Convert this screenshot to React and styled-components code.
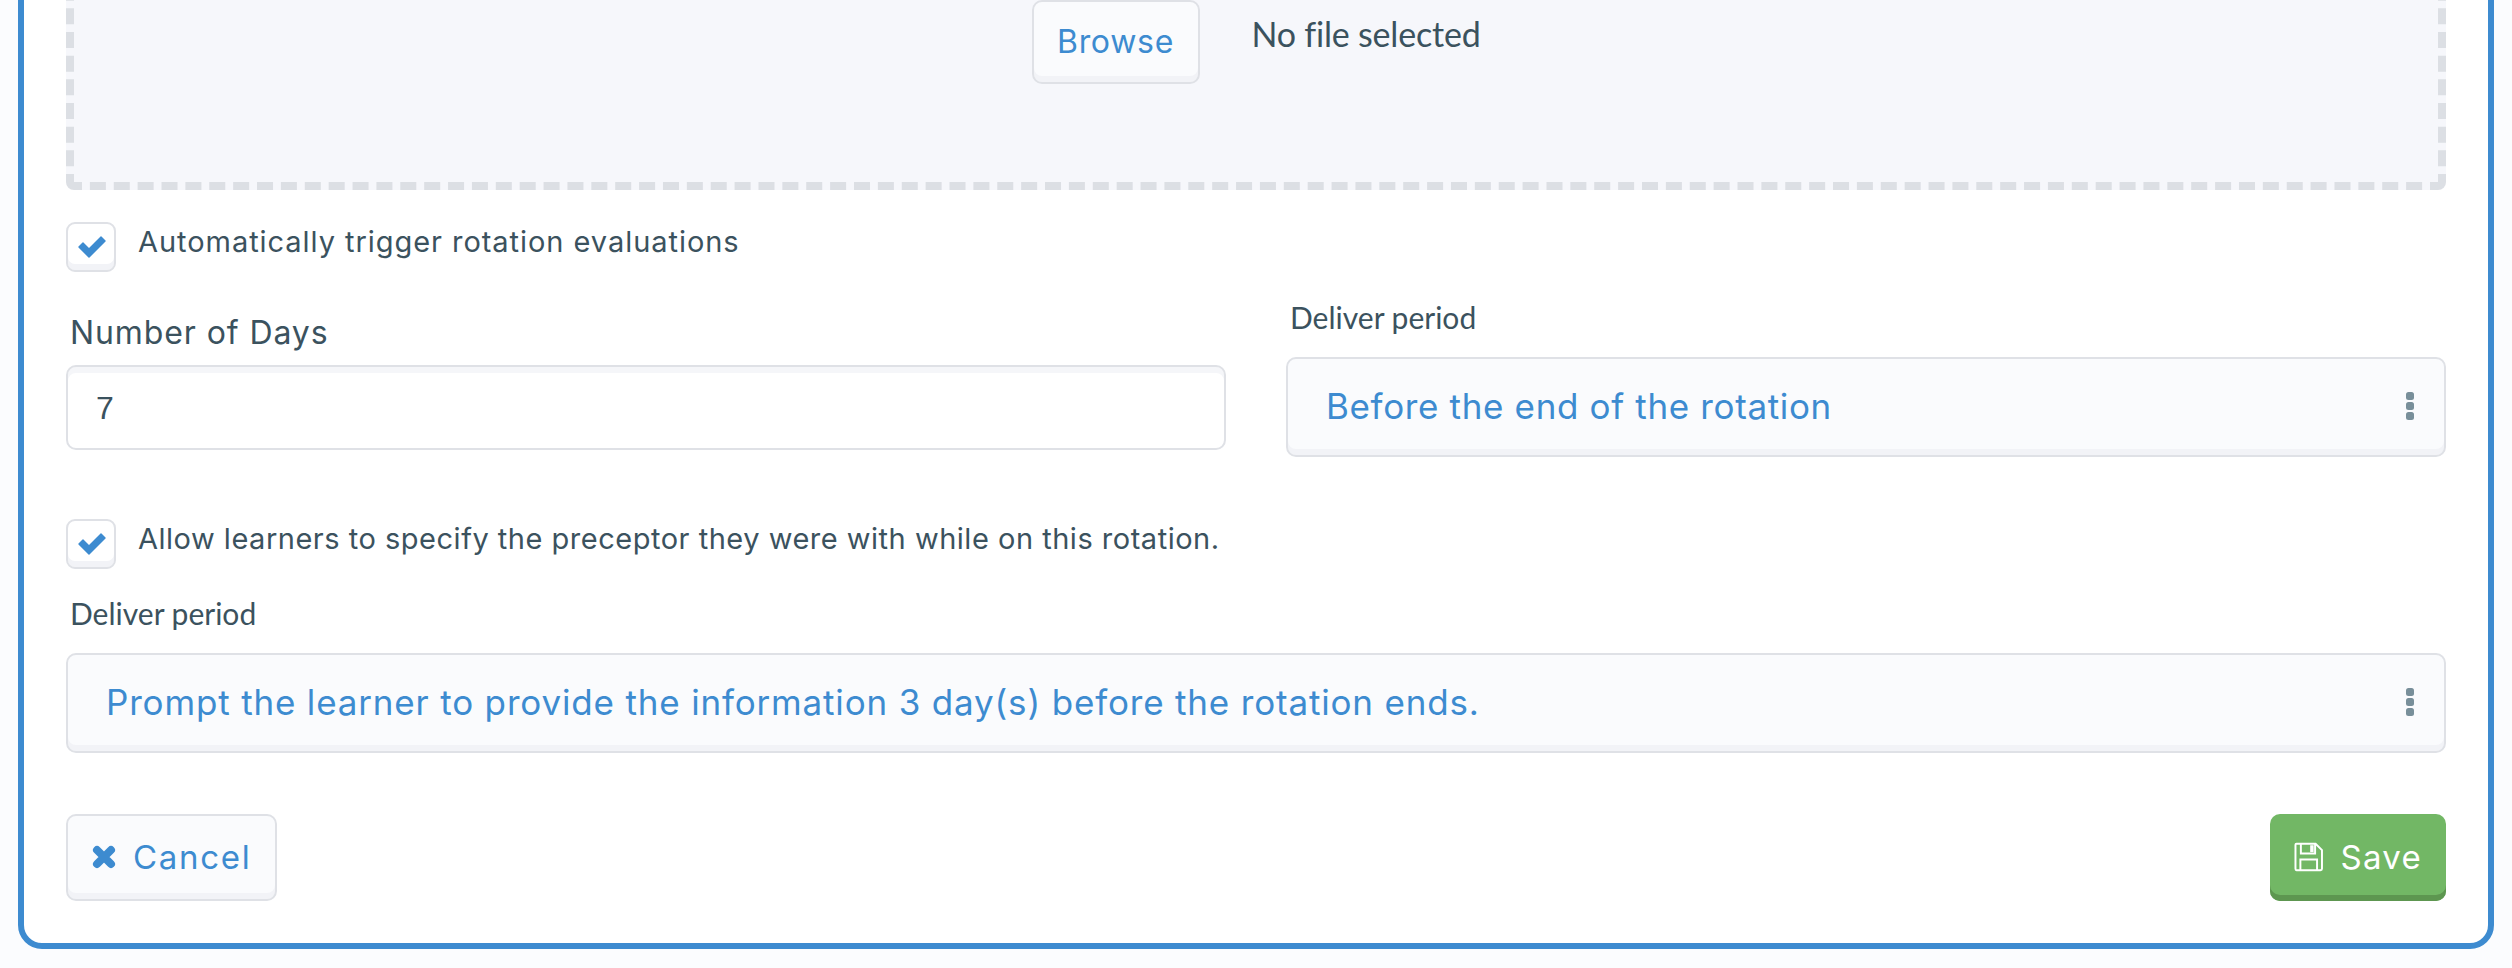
import React from 'react';
import styled, { createGlobalStyle } from 'styled-components';

const GlobalStyle = createGlobalStyle`
  html, body {
    margin: 0;
    padding: 0;
    background-color: #fbfcfe;
  }
  * {
    box-sizing: border-box;
  }
`;

const Page = styled.div`
  height: 968px;
  overflow: hidden;
  display: flex;
  flex-direction: column;
  justify-content: flex-end;
  padding: 0 18px 19px;
`;

const Panel = styled.section`
  flex-shrink: 0;
  background-color: #fff;
  border: 6px solid #3d8bd0;
  border-radius: 24px;
  padding: 24px 42px 42px;
  color: #3b525e;
`;

const DropZone = styled.div`
  height: 300px;
  background-color: #f6f7fb;
  border: 8px dashed #dcdfe4;
  border-radius: 8px;
  display: flex;
  justify-content: center;
  align-items: flex-start;
  gap: 52px;
  padding-top: 102px;
`;

const Button = styled.button`
  display: inline-flex;
  align-items: center;
  height: 87px;
  border-radius: 10px;
  border: 2px solid #dfe1e6;
  box-shadow: inset 0 -6px 0 #f2f3f7;
  background-color: #fafbfd;
  color: #3d8bd0;
  font-family: Inter, sans-serif;
  font-size: 33px;
  letter-spacing: 1.7px;
  padding: 0 24px 2px;
  gap: 17px;
`;

const BrowseButton = styled(Button)`
  height: 84px;
  width: 168px;
  justify-content: center;
  padding: 0 0 2px;
  font-size: 32px;
  letter-spacing: 0.7px;
`;

const SaveButton = styled(Button)`
  border: none;
  background-color: #72b765;
  box-shadow: inset 0 -6px 0 #5d9650;
  color: #fff;
  width: 176px;
  letter-spacing: 1.3px;
`;

const FileName = styled.span`
  font-family: Lato, sans-serif;
  font-size: 34px;
  line-height: 44px;
  letter-spacing: -0.2px;
  margin-top: 12px;
`;

const CheckRow = styled.div`
  display: flex;
  align-items: flex-start;
  gap: 22px;
  margin-top: ${(p) => p.$top}px;
`;

const CheckBox = styled.span`
  flex-shrink: 0;
  width: 50px;
  height: 50px;
  border-radius: 9px;
  border: 2px solid #dfe1e6;
  box-shadow: inset 0 -6px 0 #f2f3f7;
  background-color: #fff;
  display: flex;
  align-items: center;
  justify-content: center;
  padding: 0 0 1px 2px;
`;

const CheckText = styled.span`
  font-family: Inter, sans-serif;
  font-size: 29px;
  line-height: 42px;
  letter-spacing: ${(p) => p.$spacing}px;
  margin-top: -1px;
`;

const FieldRow = styled.div`
  display: grid;
  grid-template-columns: 1fr 1fr;
  column-gap: 60px;
  margin-top: 25px;
`;

const Field = styled.div`
  display: flex;
  flex-direction: column;
`;

const BigLabel = styled.label`
  display: block;
  font-family: Inter, sans-serif;
  font-size: 32px;
  line-height: 44px;
  letter-spacing: 0.9px;
  padding-left: 4px;
  margin-top: 14px;
  margin-bottom: 10px;
`;

const SmallLabel = styled.label`
  display: block;
  font-family: Lato, sans-serif;
  font-size: 30px;
  line-height: 40px;
  padding-left: 4px;
  margin-top: ${(p) => p.$top || 0}px;
  margin-bottom: 20px;
`;

const TextInput = styled.input`
  height: 85px;
  width: 100%;
  border-radius: 10px;
  border: 2px solid #dfe1e6;
  box-shadow: inset 0 6px 0 #f5f6f9;
  background-color: #fff;
  color: #3b525e;
  font-family: "Liberation Sans", sans-serif;
  font-size: 32px;
  padding: 2px 28px 0;
  outline: none;
`;

const Select = styled.div`
  height: 100px;
  border-radius: 10px;
  border: 2px solid #dfe1e6;
  box-shadow: inset 0 -6px 0 #f2f3f7;
  background-color: #fafbfd;
  color: #3d8bd0;
  font-family: Inter, sans-serif;
  font-size: 35px;
  letter-spacing: ${(p) => p.$spacing}px;
  display: flex;
  align-items: center;
  justify-content: space-between;
  padding: 0 30px 2px 38px;
`;

const Footer = styled.div`
  display: flex;
  justify-content: space-between;
  margin-top: 61px;
`;

const CheckIcon = () => (
  <svg width="28" height="22" viewBox="0 0 28 22" fill="#3d8bd0">
    <path d="M0.500 11.500Q0 11 0.500 10.500L4.500 6.500Q5 6 5.500 6.500L11 12L22.500 0.500Q23 0 23.500 0.500L27.500 4.500Q28 5 27.500 5.500L11.500 21.500Q11 22 10.500 21.500Z" />
  </svg>
);

const CrossIcon = () => (
  <svg width="24" height="24" viewBox="0 0 24 24" stroke="#3d8bd0" strokeWidth="8" strokeLinecap="round">
    <path d="M5 5L19 19M19 5L5 19" />
  </svg>
);

const Dots = () => (
  <svg width="8" height="28" viewBox="0 0 8 28" fill="#788f9a">
    <rect y="0" width="8" height="8" rx="2.500" />
    <rect y="10" width="8" height="8" rx="2.500" />
    <rect y="20" width="8" height="8" rx="2.500" />
  </svg>
);

const SaveIcon = () => (
  <svg width="30" height="30" viewBox="0 0 30 30" fill="none" stroke="#fff" strokeWidth="2">
    <path d="M2.500 1.500H22L28.500 8V27C28.500 28 28 28.500 27 28.500H2.500C1.800 28.500 1.500 28 1.500 27V2.500C1.500 1.800 1.800 1.500 2.500 1.500Z" />
    <path d="M7 1.500V11.500H21.500V1.500" />
    <path d="M6.500 28.500V17.500H23.500V28.500" />
    <rect x="16.500" y="3" width="3.500" height="7" fill="#fff" stroke="none" />
  </svg>
);

const App = () => {
  return (
    <Page>
      <GlobalStyle />
      <Panel>
        <DropZone>
          <BrowseButton type="button">Browse</BrowseButton>
          <FileName>No file selected</FileName>
        </DropZone>

        <CheckRow $top={32}>
          <CheckBox><CheckIcon /></CheckBox>
          <CheckText $spacing={0.95}>Automatically trigger rotation evaluations</CheckText>
        </CheckRow>

        <FieldRow>
          <Field>
            <BigLabel>Number of Days</BigLabel>
            <TextInput defaultValue="7" />
          </Field>
          <Field>
            <SmallLabel>Deliver period</SmallLabel>
            <Select $spacing={0.65}>
              Before the end of the rotation
              <Dots />
            </Select>
          </Field>
        </FieldRow>

        <CheckRow $top={62}>
          <CheckBox><CheckIcon /></CheckBox>
          <CheckText $spacing={0.51}>Allow learners to specify the preceptor they were with while on this rotation.</CheckText>
        </CheckRow>

        <SmallLabel $top={24}>Deliver period</SmallLabel>
        <Select $spacing={0.83}>
          Prompt the learner to provide the information 3 day(s) before the rotation ends.
          <Dots />
        </Select>

        <Footer>
          <Button type="button"><CrossIcon />Cancel</Button>
          <SaveButton type="button"><SaveIcon />Save</SaveButton>
        </Footer>
      </Panel>
    </Page>
  );
};

export default App;
